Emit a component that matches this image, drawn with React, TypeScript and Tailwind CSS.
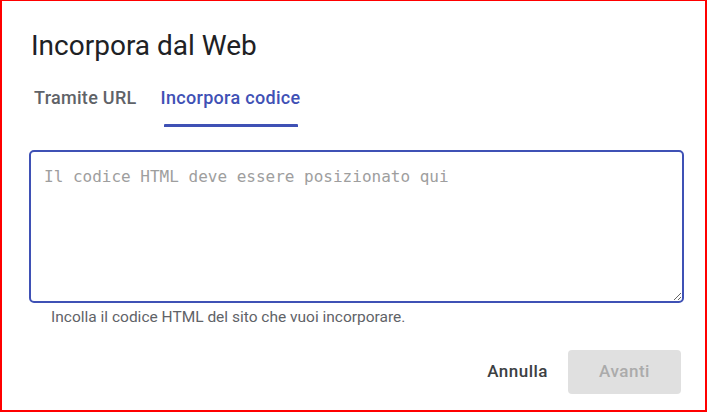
import React, { useState } from 'react';

const tabs = ['Tramite URL', 'Incorpora codice'];

const EmbedDialog: React.FC = () => {
    const [active, setActive] = useState<number>(1);
    const [code, setCode] = useState<string>('');

    return (
        <div
            className="w-[707px] h-[412px] bg-white border-t border-l-2 border-r-2 border-b-2 border-[#ff0000] flex flex-col"
            style={{ fontFamily: 'Roboto, "Liberation Sans", sans-serif' }}
        >
            <h2 className="ml-[29px] mt-[27px] text-[28px] leading-[36px] text-[#202124] font-normal">
                Incorpora dal Web
            </h2>

            {/* tab bar */}
            <div className="flex ml-[20px] mt-[18px] h-[46px]">
                {tabs.map((label, i) => (
                    <button
                        key={label}
                        onClick={() => setActive(i)}
                        className={
                            i === active
                                ? 'relative px-[12px] h-full pt-[4px] flex items-start text-[18px] leading-[24px] tracking-[0.3px] font-medium text-[#3f51b5]'
                                : 'relative px-[12px] h-full pt-[4px] flex items-start text-[18px] leading-[24px] tracking-[0.3px] font-medium text-[#5f6368]'
                        }
                    >
                        {label}
                        {i === active && (
                            <span className="absolute left-[15px] right-[14px] bottom-[1px] h-[3px] bg-[#3f51b5] rounded-t-[1px]" />
                        )}
                    </button>
                ))}
            </div>

            <div className="ml-[27px] mt-[22px]">
                <textarea
                    value={code}
                    onChange={(e) => setCode(e.target.value)}
                    placeholder="Il codice HTML deve essere posizionato qui"
                    autoFocus
                    className="block w-[655px] h-[153px] border-2 border-[#3f51b5] rounded-[5px] px-[13px] pt-[14px] text-[16px] leading-[22px] text-[#202124] placeholder:text-[#9e9e9e] outline-none resize-y"
                    style={{ fontFamily: '"DejaVu Sans Mono", "Liberation Mono", monospace' }}
                />
                <p className="ml-[22px] mt-[4px] text-[15.5px] leading-[20px] text-[#5f6368]">
                    Incolla il codice HTML del sito che vuoi incorporare.
                </p>
            </div>

            <div className="flex justify-end items-center gap-[20px] mr-[24px] mt-[23px]">
                <button className="text-[17px] tracking-[0.5px] font-medium text-[#3c4043]">Annulla</button>
                <button
                    disabled
                    className="w-[113px] h-[44px] rounded-[4px] bg-[#e0e0e0] text-[17px] tracking-[0.5px] font-medium text-[#ababab]"
                >
                    Avanti
                </button>
            </div>
        </div>
    );
};

export default function App() {
    return <EmbedDialog />;
}
